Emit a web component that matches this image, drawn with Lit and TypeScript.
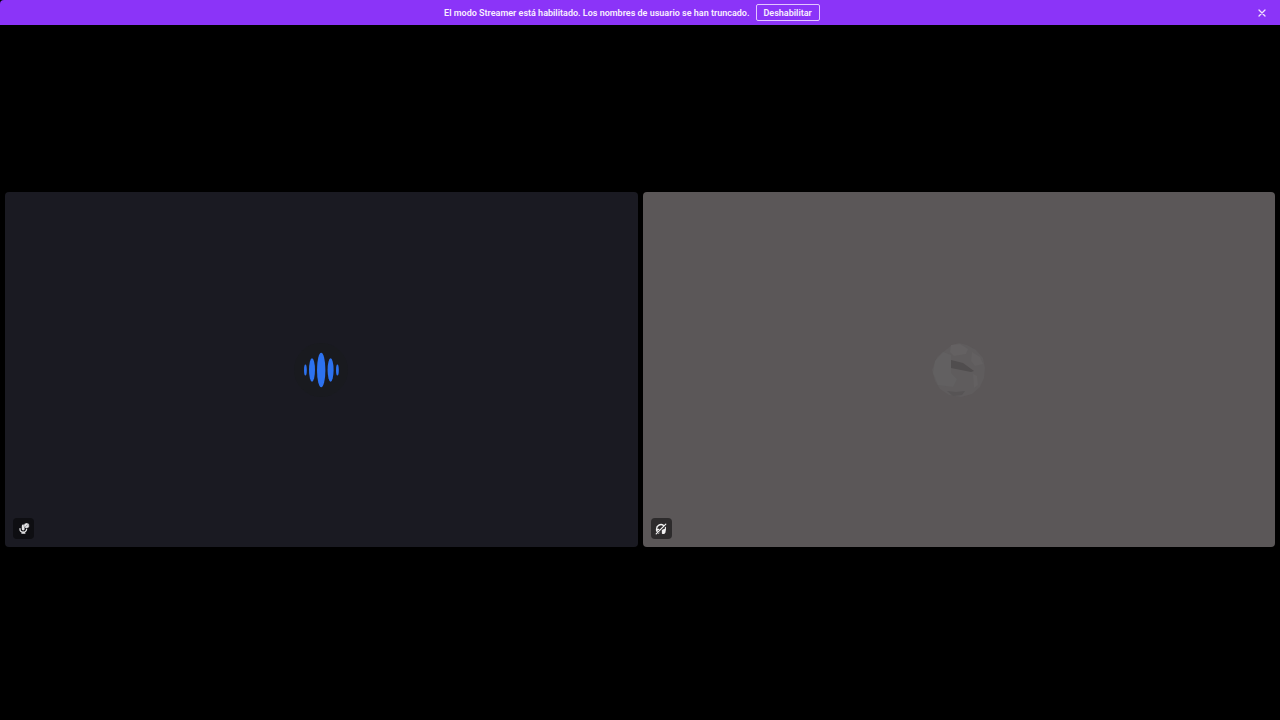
import { LitElement, html, css } from "lit";
import { customElement, state } from "lit/decorators.js";

@customElement("app-root")
export class AppRoot extends LitElement {
  @state() private noticeOpen = true;

  static styles = css`
    :host {
      display: flex;
      flex-direction: column;
      min-height: 100vh;
      background: #000;
      color: #f9efff;
      font-family: Roboto, "Noto Sans", sans-serif;
      font-size: 9px;
      font-weight: 600;
    }
    .notice {
      display: flex;
      align-items: center;
      height: 25px;
      padding: 0 12px 0 8px;
      background: #8b34f8;
      border-top-left-radius: 4px;
    }
    .message {
      flex: 1;
      display: flex;
      align-items: center;
      justify-content: center;
      gap: 6px;
    }
    button {
      font: inherit;
      color: inherit;
      background: none;
      border: 0;
      padding: 0;
      cursor: pointer;
    }
    .disable {
      height: 17px;
      padding: 0 7px;
      border: 1px solid #e3c6ff;
      border-radius: 2px;
    }
    .close {
      display: flex;
      padding: 2px;
    }
    .grid {
      flex: 1;
      display: grid;
      grid-template-columns: 1fr 1fr;
      align-content: center;
      gap: 5px;
      padding: 0 5px 6px;
    }
    .tile {
      display: grid;
      place-items: center;
      position: relative;
      aspect-ratio: 16 / 9;
      border-radius: 4px;
      background: #1a1a22;
    }
    .tile.gray {
      background: #5b5758;
    }
    .avatar {
      width: 54px;
      height: 54px;
    }
    .badge {
      position: absolute;
      left: 8px;
      bottom: 8px;
      display: grid;
      place-items: center;
      width: 21px;
      height: 21px;
      border-radius: 4px;
      background: #0e0e12;
    }
    .gray .badge {
      background: #2d2b2c;
    }
  `;

  render() {
    return html`
      ${this.noticeOpen
        ? html`<header class="notice">
            <div class="message">
              <span>El modo Streamer está habilitado. Los nombres de usuario se han truncado.</span>
              <button class="disable" @click=${this.dismiss}>Deshabilitar</button>
            </div>
            <button class="close" aria-label="Cerrar" @click=${this.dismiss}>
              <svg width="8" height="8" viewBox="0 0 8 8" stroke="#f3e2ff" stroke-width="1.3" stroke-linecap="round">
                <path d="M1 1l6 6M7 1l-6 6" />
              </svg>
            </button>
          </header>`
        : null}
      <main class="grid">
        <section class="tile">
          <svg class="avatar" viewBox="0 0 54 54">
            <circle cx="27" cy="27" r="27" fill="#191a1f" />
            <g fill="#2d72f0">
              <ellipse cx="11.4" cy="27" rx="1.4" ry="5.6" />
              <ellipse cx="18" cy="27" rx="3" ry="11.7" />
              <ellipse cx="27.2" cy="27" rx="4.2" ry="17.2" />
              <ellipse cx="36.6" cy="27" rx="3" ry="11.7" />
              <ellipse cx="43.4" cy="27" rx="1.4" ry="5.6" />
            </g>
          </svg>
          <span class="badge">
            <svg width="13" height="13" viewBox="0 0 13 13" fill="none" stroke="#e4e4e6" stroke-linecap="round">
              <path d="M6.2 4v3" stroke-width="2.8" />
              <path d="M3 6.6a3.3 3.3 0 0 0 6.6 .6M6.3 9.8v1.4M5 11.2h2.8" stroke-width="1.3" />
              <circle cx="9.6" cy="3.6" r="2.7" fill="#e4e4e6" stroke="#0e0e12" stroke-width=".3" />
              <path d="M8.8 4.4l1.6-1.6" stroke="#7a7a80" stroke-width=".8" />
            </svg>
          </span>
        </section>
        <section class="tile gray">
          <svg class="avatar" viewBox="0 0 54 54">
            <path d="M20 2l7-2 8 2 9 5 7 8 2 10-1 10-4 9-8 7-11 3-12-2-9-6-5-8-3-11 5-13z" fill="#5f5c5d" />
            <path d="M19 2l9-1 8 5-2 5-12 2-4-4z" fill="#646162" />
            <path d="M3 18l8-9 8 3v18l6 6-4 8-15-2-5-12z" fill="#626061" />
            <path d="M40 9l8 5 3 7-8 2-4-5z" fill="#636061" />
            <path d="M19 17l12 3 11 8-3 1-20-4z" fill="#504d4e" />
            <path d="M15 48l9 1 9-1-3 4-9 1z" fill="#575455" />
            <path d="M41 31l4 2 1 9-4 3z" fill="#636061" />
          </svg>
          <span class="badge">
            <svg width="12" height="12" viewBox="0 0 12 12" fill="none" stroke="#f2f2f2" stroke-linecap="round">
              <path d="M1.6 7.4V6A4.4 4.4 0 0 1 8.4 2.3" stroke-width="1.4" />
              <path d="M1.2 10.8l9.6-9.6" stroke-width="1.2" />
              <path d="M10.4 4.4V6.2L9.9 9.4A2 2 0 0 1 7.4 10.2V7.4L9.8 6.2" fill="#f2f2f2" stroke-width="1.1" />
              <path d="M2 8.4V6.6L3.8 6.4" stroke-width="1.4" />
              <path d="M3.8 10.4l.4-.4" stroke-width="1" />
            </svg>
          </span>
        </section>
      </main>
    `;
  }

  private dismiss() {
    this.noticeOpen = false;
  }
}
